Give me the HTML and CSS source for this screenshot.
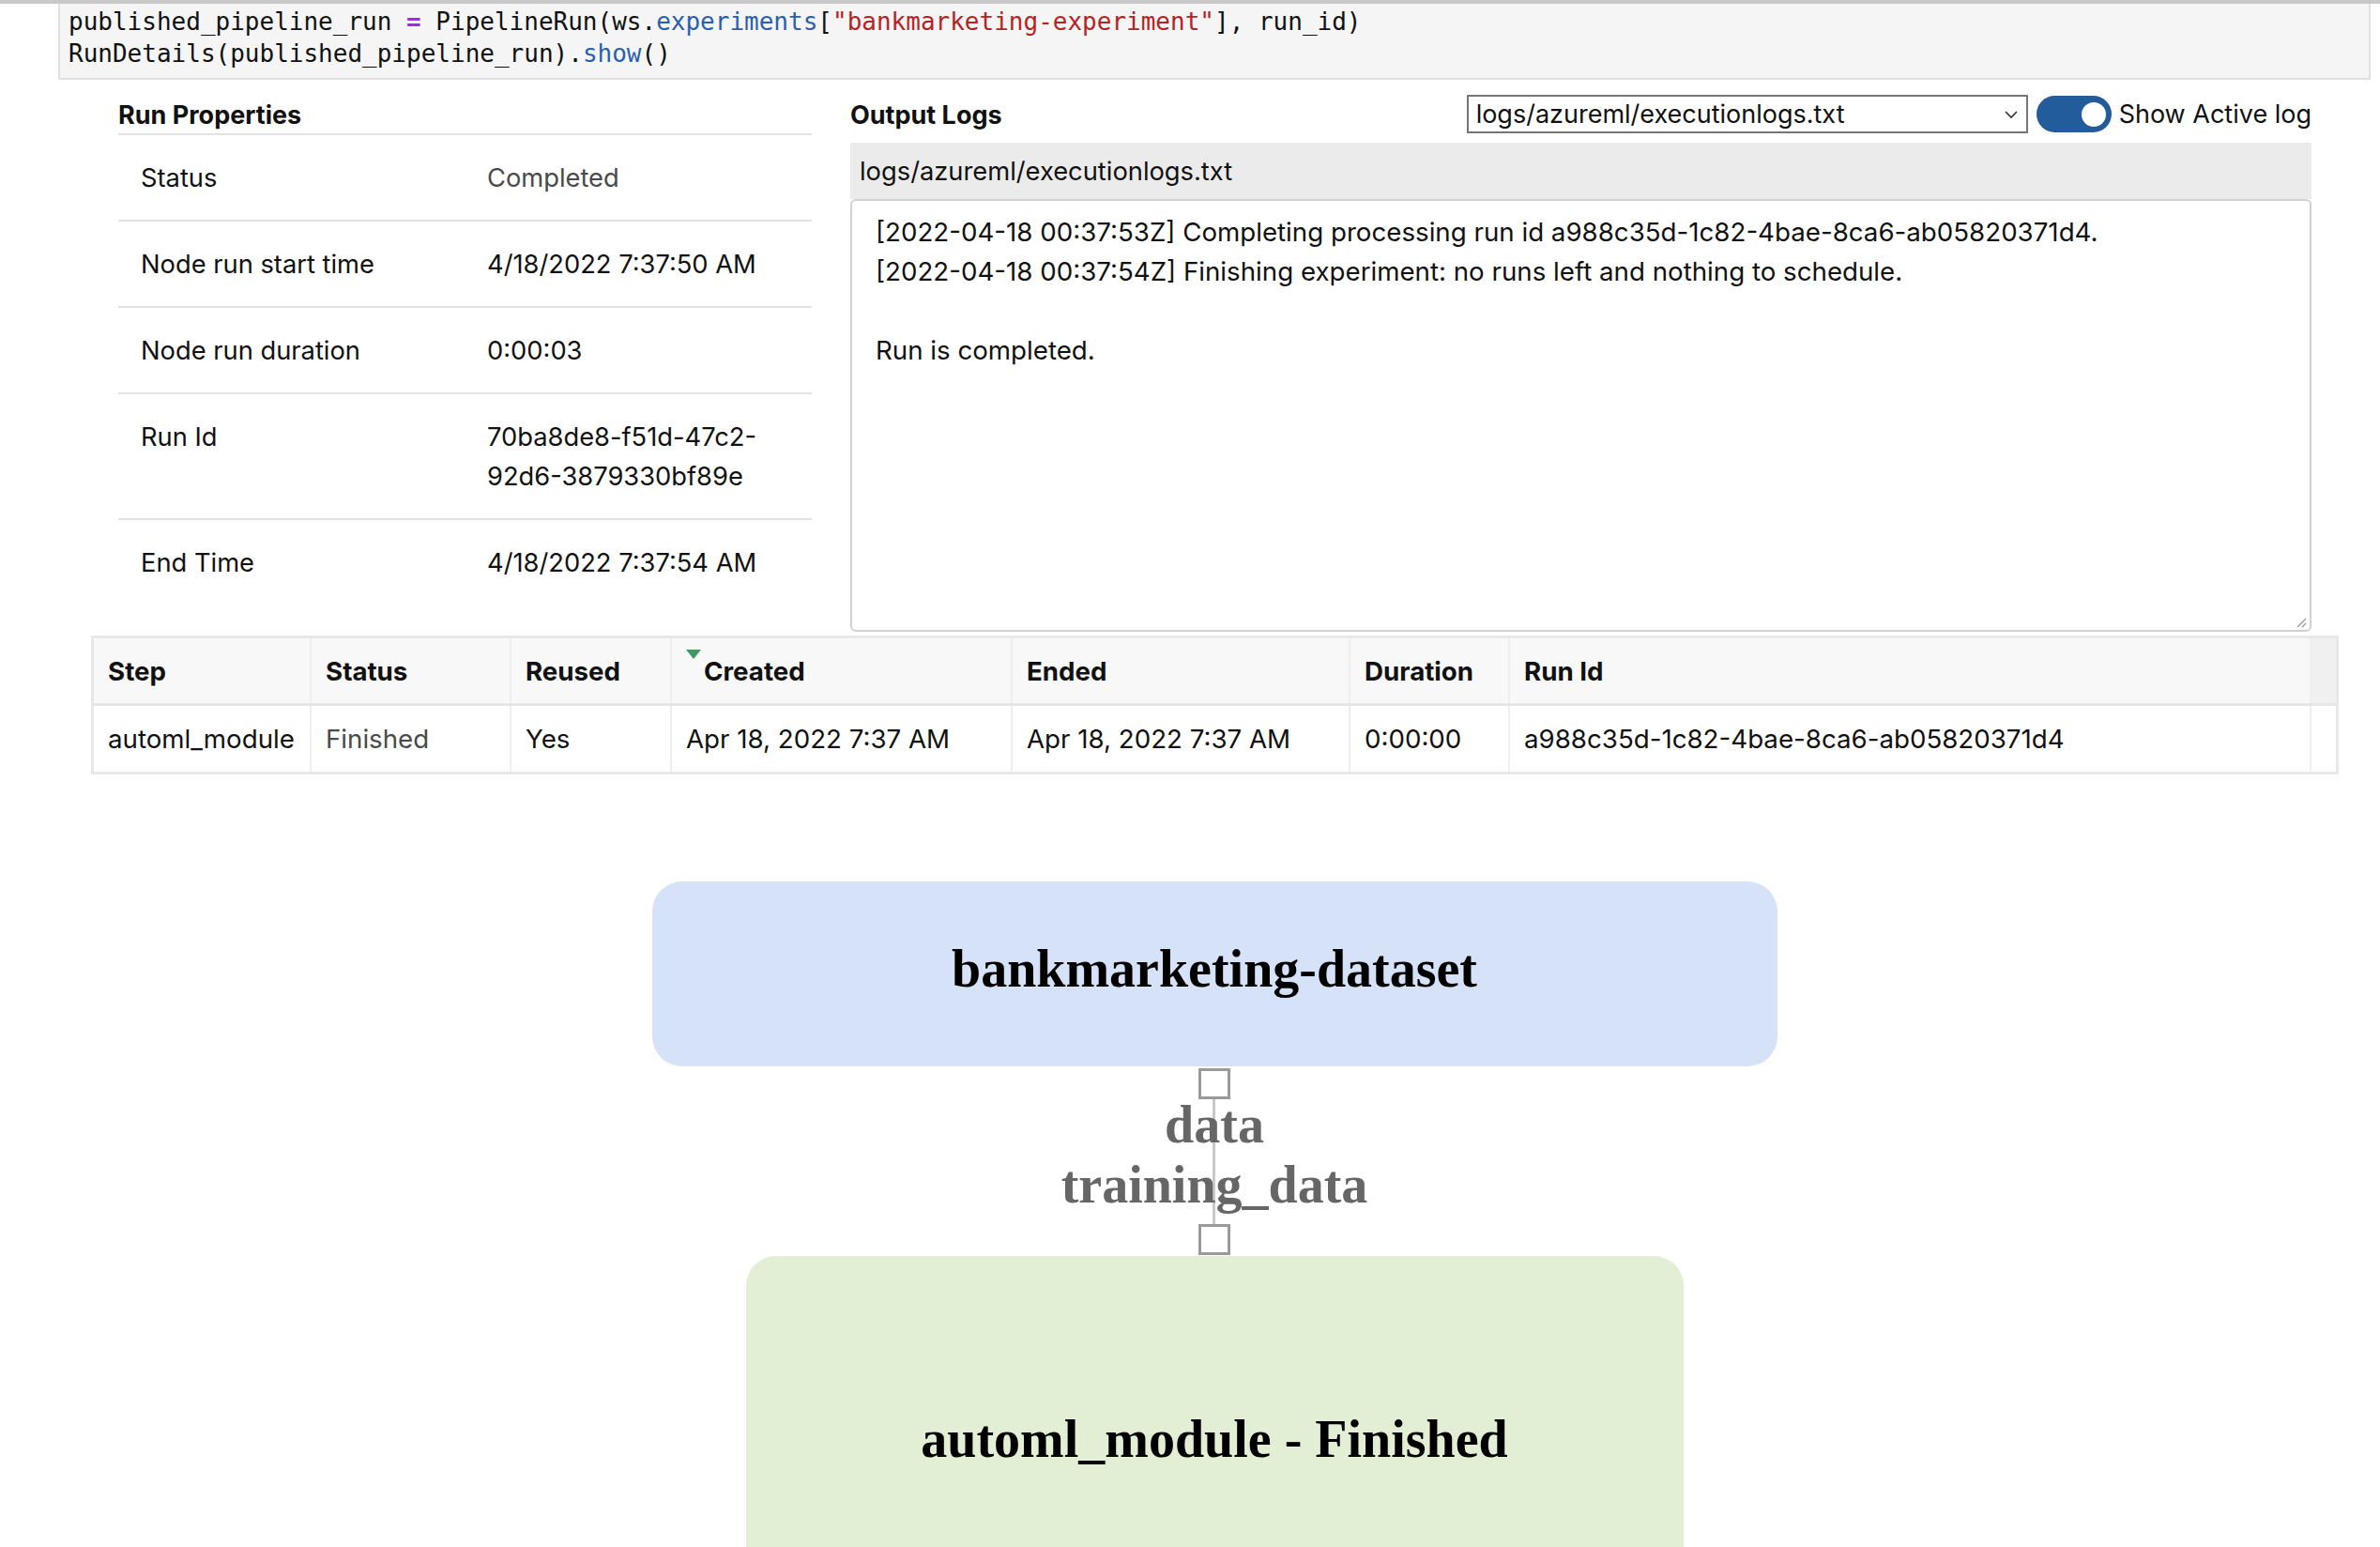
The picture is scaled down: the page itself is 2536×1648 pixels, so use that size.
FILE: index.html
```html
<!DOCTYPE html>
<html>
<head>
<meta charset="utf-8">
<link rel="stylesheet" href="styles.css">
</head>
<body>
<div class="topbar"></div>
<div class="cell">
<pre class="code"><code class="ln">published_pipeline_run <span class="op">=</span> PipelineRun(ws.<span class="prop">experiments</span>[<span class="str">"bankmarketing-experiment"</span>], run_id)</code>
<code class="ln">RunDetails(published_pipeline_run).<span class="prop">show</span>()</code></pre>
</div>

<div class="widget">
  <div class="top-grid">
    <div class="props">
      <div class="props-title">Run Properties</div>
      <div class="prop-row"><div class="prop-label">Status</div><div class="prop-value muted">Completed</div></div>
      <div class="prop-row"><div class="prop-label">Node run start time</div><div class="prop-value">4/18/2022 7:37:50 AM</div></div>
      <div class="prop-row"><div class="prop-label">Node run duration</div><div class="prop-value">0:00:03</div></div>
      <div class="prop-row"><div class="prop-label">Run Id</div><div class="prop-value">70ba8de8-f51d-47c2-<br>92d6-3879330bf89e</div></div>
      <div class="prop-row"><div class="prop-label">End Time</div><div class="prop-value">4/18/2022 7:37:54 AM</div></div>
    </div>
    <div class="logs">
      <div class="logs-head">
        <div class="logs-title">Output Logs</div>
        <div class="select"><span>logs/azureml/executionlogs.txt</span>
          <svg class="chev" width="16" height="10" viewBox="0 0 16 10"><polyline points="2,2 8,8 14,2" fill="none" stroke="#333" stroke-width="1.6"/></svg>
        </div>
        <div class="toggle"><div class="knob"></div></div>
        <div class="toggle-label">Show Active log</div>
      </div>
      <div class="log-file">logs/azureml/executionlogs.txt</div>
      <div class="log-area">
        <div>[2022-04-18 00:37:53Z] Completing processing run id a988c35d-1c82-4bae-8ca6-ab05820371d4.</div>
        <div>[2022-04-18 00:37:54Z] Finishing experiment: no runs left and nothing to schedule.</div>
        <div>&nbsp;</div>
        <div>Run is completed.</div>
        <svg class="grip" width="14" height="14" viewBox="0 0 14 14"><line x1="4" y1="13" x2="13" y2="4" stroke="#999" stroke-width="1.2"/><line x1="9" y1="13" x2="13" y2="9" stroke="#999" stroke-width="1.2"/></svg>
      </div>
    </div>
  </div>

  <div class="steps">
    <div class="steps-row head">
      <div class="c c1">Step</div>
      <div class="c c2">Status</div>
      <div class="c c3">Reused</div>
      <div class="c c4 sorted"><span class="sort-tri"></span>Created</div>
      <div class="c c5">Ended</div>
      <div class="c c6">Duration</div>
      <div class="c c7">Run Id</div>
      <div class="c gut"></div>
    </div>
    <div class="steps-row body">
      <div class="c c1">automl_module</div>
      <div class="c c2 muted">Finished</div>
      <div class="c c3">Yes</div>
      <div class="c c4">Apr 18, 2022 7:37 AM</div>
      <div class="c c5">Apr 18, 2022 7:37 AM</div>
      <div class="c c6">0:00:00</div>
      <div class="c c7">a988c35d-1c82-4bae-8ca6-ab05820371d4</div>
      <div class="c gut"></div>
    </div>
  </div>
</div>

<div class="diagram">
  <div class="node dataset">bankmarketing-dataset</div>
  <div class="port"></div>
  <div class="edge">
    <div class="edge-text">
      <div>data</div>
      <div>training_data</div>
    </div>
  </div>
  <div class="port"></div>
  <div class="node module">automl_module - Finished</div>
</div>
</body>
</html>
```

FILE: styles.css
```css
html, body {
  margin: 0;
  padding: 0;
  background: #ffffff;
  overflow: hidden;
}
body {
  font-family: Inter, "Noto Sans", sans-serif;
  color: #111;
  height: 1648px;
}
.topbar {
  height: 4px;
  background: #c8c8c8;
}
.cell {
  margin-left: 62px;
  width: 2464px;
  box-sizing: border-box;
  height: 81px;
  background: #f5f5f5;
  border: 2px solid #e0e0e0;
  border-top: none;
  padding: 2px 9px 0 9px;
}
.code {
  margin: 0;
  font-family: "DejaVu Sans Mono", "Liberation Mono", monospace;
  font-size: 26px;
  line-height: 34px;
  color: #111;
}
.ln { font-family: inherit; }
.op { color: #aa22ff; font-weight: bold; }
.prop { color: #2a5fb0; }
.str { color: #ba2121; }

.widget {
  margin-left: 97px;
  width: 2395px;
}
.top-grid {
  display: flex;
  padding: 16px 29px 0 29px;
  gap: 41px;
}
.props {
  width: 739px;
  flex: none;
}
.props-title {
  font-weight: 700;
  font-size: 27px;
  line-height: 43px;
  height: 41px;
}
.prop-row {
  display: grid;
  grid-template-columns: 369px 1fr;
  border-top: 2px solid #e3e3e6;
  padding: 25px 0 23px 24px;
  font-size: 27.3px;
  line-height: 42px;
}
.prop-value { color: #111; }
.muted { color: #4a4a4a; }

.logs {
  flex: 1;
  min-width: 0;
}
.logs-head {
  display: flex;
  align-items: center;
  height: 41px;
}
.logs-title {
  flex: 1;
  font-weight: 700;
  font-size: 27px;
  line-height: 40px;
  padding-top: 2px;
}
.select {
  width: 598px;
  height: 41px;
  box-sizing: border-box;
  border: 2px solid #767676;
  background: #fff;
  display: flex;
  align-items: center;
  justify-content: space-between;
  padding: 0 8px 0 8px;
  font-size: 27px;
}
.toggle {
  margin-left: 9px;
  width: 80px;
  height: 39px;
  border-radius: 20px;
  background: #235c9b;
  display: flex;
  align-items: center;
  justify-content: flex-end;
  padding-right: 6px;
  box-sizing: border-box;
}
.knob {
  width: 26px;
  height: 26px;
  border-radius: 50%;
  background: #fff;
}
.toggle-label {
  margin-left: 8px;
  font-size: 27px;
  line-height: 40px;
}
.log-file {
  margin-top: 10px;
  height: 60px;
  background: #ebebeb;
  font-size: 27.3px;
  line-height: 62px;
  padding-left: 10px;
}
.log-area {
  height: 461px;
  box-sizing: border-box;
  border: 2px solid #d2d2d2;
  border-radius: 6px;
  padding: 12px 25px;
  font-size: 27.7px;
  line-height: 42px;
  display: flex;
  flex-direction: column;
}
.grip {
  margin-top: auto;
  align-self: flex-end;
  margin-right: -22px;
  margin-bottom: -10px;
}

.steps {
  margin-top: 4px;
  border: 3px solid #e8e8e8;
  font-size: 27.7px;
}
.steps-row {
  display: flex;
}
.steps-row.head {
  background: #f8f8f8;
  font-weight: 700;
  height: 69px;
  border-bottom: 3px solid #e6e6e6;
}
.steps-row.body {
  height: 70px;
  background: #fff;
}
.c {
  box-sizing: border-box;
  padding-left: 15px;
  display: flex;
  align-items: center;
  border-right: 2px solid #eeeeee;
  white-space: nowrap;
}
.c1 { width: 232px; }
.c2 { width: 213px; }
.c3 { width: 171px; }
.c4 { width: 363px; }
.c5 { width: 360px; }
.c6 { width: 170px; }
.c7 { width: 854px; }
.gut { flex: 1; padding: 0; border-right: none; }
.head .gut { background: #f0f0f0; }
.sorted { position: relative; padding-left: 34px; }
.sort-tri {
  position: absolute;
  left: 15px;
  top: 12px;
  width: 0;
  height: 0;
  border-left: 8px solid transparent;
  border-right: 8px solid transparent;
  border-top: 10px solid #3f9a62;
}

.diagram {
  margin-left: 62px;
  width: 2464px;
  display: flex;
  flex-direction: column;
  align-items: center;
  padding-top: 114px;
  font-family: "Liberation Serif", "Times New Roman", serif;
  font-weight: 700;
}
.node {
  display: flex;
  align-items: center;
  justify-content: center;
  font-size: 56px;
  color: #000;
  border-radius: 32px;
  box-sizing: border-box;
}
.dataset {
  width: 1199px;
  height: 197px;
  background: #d6e2f7;
  padding-bottom: 12px;
}
.module {
  width: 999px;
  height: 390px;
  background: #e2efd4;
  flex: none;
}
.port {
  width: 34px;
  height: 33px;
  box-sizing: border-box;
  border: 3px solid #9a9a9a;
  background: #fff;
  flex: none;
}
.dataset + .port { margin-top: 2px; }
.edge {
  height: 133px;
  flex: none;
  text-align: center;
  font-size: 56px;
  line-height: 64px;
  color: #666;
  background: linear-gradient(#c8c8c8, #c8c8c8) center / 3px 100% no-repeat;
}
.edge-text { margin-top: -5px; }
.edge + .port { margin-bottom: 1px; }
```
